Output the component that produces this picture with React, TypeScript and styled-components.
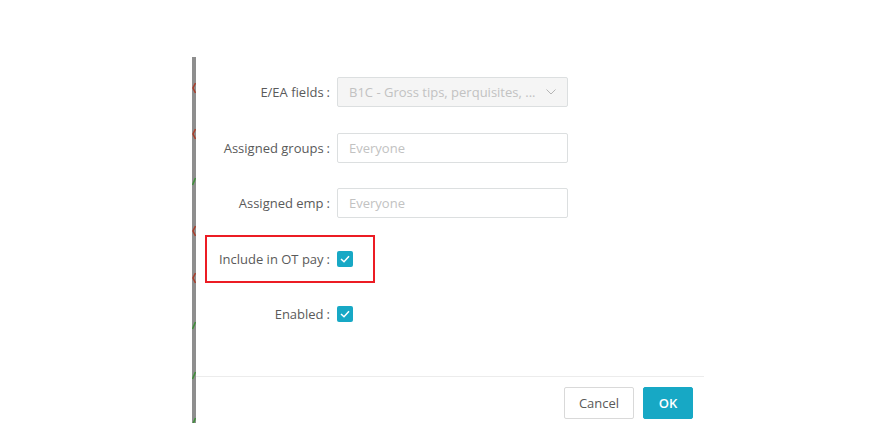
import styled, { createGlobalStyle } from 'styled-components';

const GlobalStyle = createGlobalStyle`
  html, body {
    margin: 0;
    padding: 0;
    background: #ffffff;
  }
  body {
    font-family: 'Open Sans', 'Noto Sans', 'Noto Sans CJK SC', sans-serif;
    font-size: 13px;
    color: #555;
  }
`;

interface FieldRow {
  label: string;
  kind: 'select' | 'input' | 'checkbox';
  value?: string;
  highlighted?: boolean;
}

const rows: FieldRow[] = [
  { label: 'E/EA fields', kind: 'select', value: 'B1C - Gross tips, perquisites, ...' },
  { label: 'Assigned groups', kind: 'input', value: 'Everyone' },
  { label: 'Assigned emp', kind: 'input', value: 'Everyone' },
  { label: 'Include in OT pay', kind: 'checkbox', highlighted: true },
  { label: 'Enabled', kind: 'checkbox' },
];

const ChevronDown = () => (
  <svg width="10" height="6" viewBox="0 0 10 6" fill="none">
    <path d="M0.5 0.5 L5 5 L9.5 0.5" stroke="#b5b5b5" strokeWidth="1" />
  </svg>
);

const CheckMark = () => (
  <svg width="10" height="8" viewBox="0 0 10 8" fill="none">
    <path d="M1 4 L4 6.8 L9 1.2" stroke="#ffffff" strokeWidth="1.5" />
  </svg>
);

// the bit of the page behind the modal: a grey edge with scraps of icons
const EdgeStrip = () => (
  <svg width="4" height="366" viewBox="0 0 4 366">
    <rect x="0" y="0" width="4" height="366" fill="#8e8e8e" />
    {[26, 72, 169, 216].map((y) => (
      <path key={y} d={`M3.5 ${y} L1 ${y + 5} L3.5 ${y + 10}`} stroke="#a8402e" strokeWidth="1.6" fill="none" />
    ))}
    {[121, 265, 315, 361].map((y) => (
      <path key={y} d={`M0.5 ${y + 7} L3.5 ${y}`} stroke="#3f8f3a" strokeWidth="1.6" fill="none" />
    ))}
  </svg>
);

const App = () => {
  return (
    <>
      <GlobalStyle />
      <Page>
        <EdgeStrip />
        <Modal>
          <Form>
            {rows.map((row) => (
              <Row key={row.label}>
                {row.highlighted && <Highlight />}
                <Label>
                  {row.label}
                  <Colon>:</Colon>
                </Label>
                {row.kind === 'select' && (
                  <SelectBox>
                    <span>{row.value}</span>
                    <ChevronDown />
                  </SelectBox>
                )}
                {row.kind === 'input' && <Input placeholder={row.value} />}
                {row.kind === 'checkbox' && (
                  <Checkbox>
                    <CheckMark />
                  </Checkbox>
                )}
              </Row>
            ))}
          </Form>
          <Footer>
            <Button $width={70}>Cancel</Button>
            <Button $width={50} $primary>
              OK
            </Button>
          </Footer>
        </Modal>
      </Page>
    </>
  );
};

export default App;

const Page = styled.div`
  display: flex;
  padding: 57px 0 0 192px;
  height: 423px;
  box-sizing: border-box;
  overflow: hidden;
`;

const Modal = styled.div`
  width: 508px;
  display: flex;
  flex-direction: column;
`;

const Form = styled.div`
  display: flex;
  flex-direction: column;
  gap: 25.5px;
  padding-top: 20px;
  height: 319px;
  box-sizing: border-box;
`;

const Row = styled.div`
  position: relative;
  display: flex;
  align-items: center;
  height: 30px;
`;

const Highlight = styled.div`
  position: absolute;
  left: 9px;
  top: -8.5px;
  width: 170px;
  height: 48px;
  border: 2px solid #ec1c24;
  box-sizing: border-box;
  pointer-events: none;
`;

const Label = styled.div`
  width: 141px;
  text-align: right;
  color: #5a5a5a;
  white-space: nowrap;
  flex-shrink: 0;
`;

const Colon = styled.span`
  margin: 0 7px 0 3px;
`;

const SelectBox = styled.div`
  width: 231px;
  height: 30px;
  box-sizing: border-box;
  border: 1px solid #dcdfe0;
  border-radius: 2px;
  background: #f5f5f5;
  display: flex;
  align-items: center;
  justify-content: space-between;
  padding: 0 11px;
  color: #c2c2c2;
`;

const Input = styled.input`
  width: 231px;
  height: 30px;
  box-sizing: border-box;
  border: 1px solid #dcdfe0;
  border-radius: 2px;
  background: #fff;
  padding: 0 11px;
  font: inherit;
  outline: none;

  &::placeholder {
    color: #c2c2c2;
  }
`;

const Checkbox = styled.div`
  width: 16px;
  height: 16px;
  border-radius: 2px;
  background: #17a8c5;
  display: flex;
  align-items: center;
  justify-content: center;
`;

const Footer = styled.div`
  border-top: 1px solid #ececec;
  display: flex;
  justify-content: flex-end;
  gap: 9px;
  padding: 10px 11px 0 0;
`;

const Button = styled.button<{ $primary?: boolean; $width: number }>`
  height: 32px;
  width: ${({ $width }) => $width}px;
  padding: 0;
  border-radius: 2px;
  border: 1px solid ${({ $primary }) => ($primary ? '#17a8c5' : '#d9d9d9')};
  background: ${({ $primary }) => ($primary ? '#17a8c5' : '#fff')};
  color: ${({ $primary }) => ($primary ? '#fff' : '#595959')};
  font-family: inherit;
  font-size: 13px;
  font-weight: ${({ $primary }) => ($primary ? 600 : 400)};
  cursor: pointer;
`;
